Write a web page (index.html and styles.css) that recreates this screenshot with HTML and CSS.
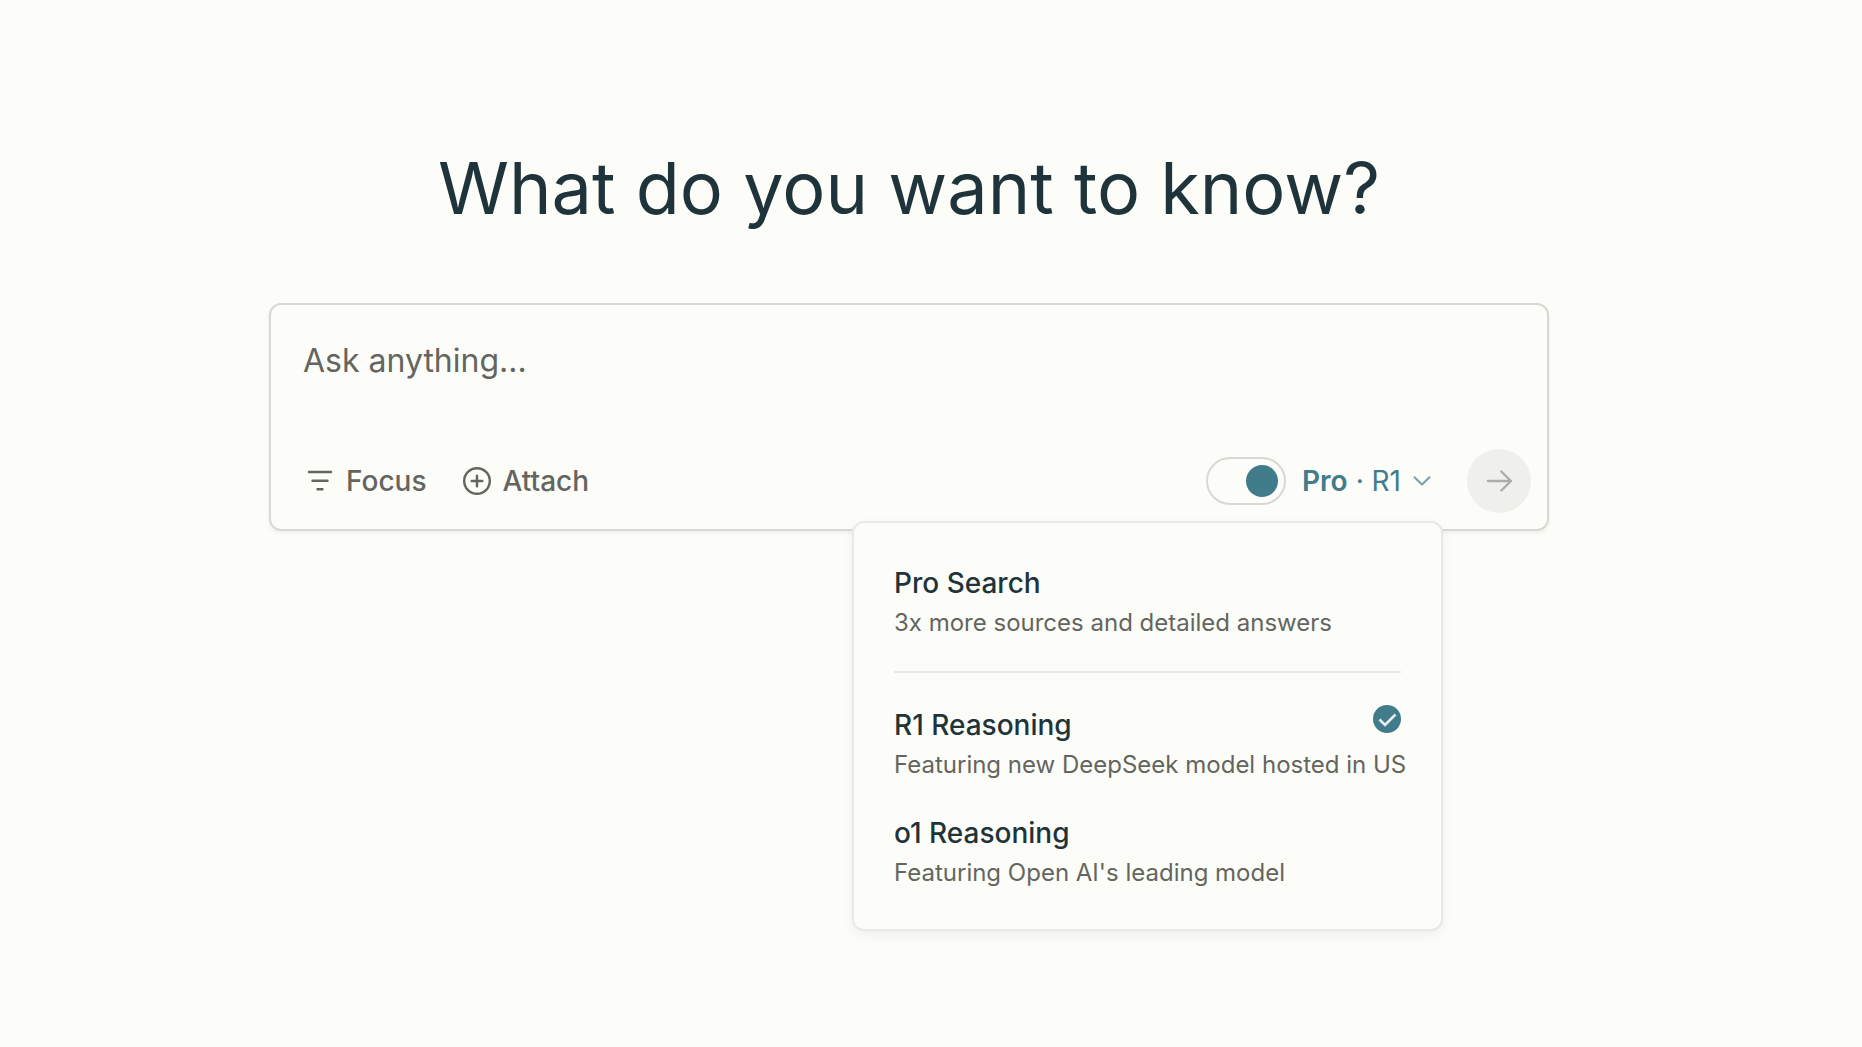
FILE: index.html
```html
<!DOCTYPE html>
<html lang="en">
<head>
<meta charset="UTF-8">
<meta name="viewport" content="width=device-width, initial-scale=1.0">
<title>What do you want to know?</title>
<link rel="stylesheet" href="styles.css">
</head>
<body>

<main class="page">
    <h1 class="title">What do you want to know?</h1>

    <!-- Search box -->
    <form class="search-box">
        <textarea class="question" rows="1" placeholder="Ask anything..." aria-label="Ask anything"></textarea>

        <div class="toolbar">
            <button type="button" class="tool-btn">
                <svg class="icon" viewBox="0 0 28 28" fill="none" stroke="currentColor" stroke-width="2.400" stroke-linecap="round">
                    <path d="M3 5h22M6.500 13.700h15M11.500 22.300h5"/>
                </svg>
                Focus
            </button>
            <button type="button" class="tool-btn">
                <svg class="icon" viewBox="0 0 28 28" fill="none" stroke="currentColor" stroke-width="2.400" stroke-linecap="round">
                    <circle cx="14" cy="14" r="12.800"/>
                    <path d="M14 8.700v10.600M8.700 14h10.600"/>
                </svg>
                Attach
            </button>

            <div class="model">
                <input type="checkbox" id="pro" class="toggle" checked>
                <label for="pro" class="pro-label">Pro</label>
                <button type="button" class="model-btn" aria-haspopup="menu" aria-expanded="true">
                    <span>· R1</span>
                    <svg class="chevron" viewBox="0 0 18 10" fill="none" stroke="currentColor" stroke-width="2" stroke-linecap="round" stroke-linejoin="round">
                        <path d="M1.500 1.200L9 8.500l7.500-7.300"/>
                    </svg>
                </button>
            </div>

            <button type="submit" class="send-btn" aria-label="Send">
                <svg class="icon" viewBox="0 0 28 28" fill="none" stroke="currentColor" stroke-width="2.400" stroke-linecap="round" stroke-linejoin="round">
                    <path d="M3 14h23M16.300 4.500l9.700 9.500-9.700 9.500"/>
                </svg>
            </button>
        </div>

        <!-- Model menu -->
        <div class="menu" role="menu">
            <button type="button" class="menu-item" role="menuitem">
                <span class="menu-name">Pro Search</span>
                <span class="menu-text">3x more sources and detailed answers</span>
            </button>
            <hr class="divider">
            <button type="button" class="menu-item" role="menuitem">
                <span class="menu-name">R1 Reasoning
                    <svg class="check" viewBox="0 0 28 28">
                        <circle cx="14" cy="14" r="14" fill="#417c8a"/>
                        <path d="M6.500 14.500l5.500 5.500L22.500 9.500" fill="none" stroke="#e9f3f8" stroke-width="2.600"/>
                    </svg>
                </span>
                <span class="menu-text">Featuring new DeepSeek model hosted in US</span>
            </button>
            <button type="button" class="menu-item" role="menuitem">
                <span class="menu-name">o1 Reasoning</span>
                <span class="menu-text">Featuring Open AI's leading model</span>
            </button>
        </div>
    </form>
</main>

</body>
</html>
```
FILE: styles.css
```css
* {
    box-sizing: border-box;
}

body {
    min-height: 100vh;
    margin: 0;
    background-color: #fcfdf8;
    color: #1f343a;
    font-family: Inter, "Liberation Sans", sans-serif;
}

button {
    padding: 0;
    border: none;
    background: none;
    color: inherit;
    font: inherit;
    text-align: left;
    cursor: pointer;
}

.page {
    max-width: 1324px;
    min-height: 100vh;
    margin: 0 auto;
    padding: 140px 44px 0 0;
}

.title {
    margin: 0 0 67px;
    font-size: 72px;
    font-weight: 400;
    line-height: 96px;
    text-align: center;
}

/* Search box */
.search-box {
    position: relative;
    padding: 32px 16px 16px 32px;
    border: 2px solid #d8d9d4;
    border-radius: 12px;
    box-shadow: 0 2px 4px rgba(0, 0, 0, 0.06);
}

.question {
    display: block;
    width: 100%;
    height: 48px;
    margin-bottom: 64px;
    padding: 0;
    border: none;
    outline: none;
    resize: none;
    overflow: hidden;
    background: none;
    color: inherit;
    font: inherit;
    font-size: 32px;
    line-height: 48px;
}

.question::placeholder {
    color: #64655f;
    opacity: 1;
}

.toolbar {
    display: flex;
    align-items: center;
    gap: 36px;
    padding-left: 3px;
    font-size: 28px;
    line-height: 40px;
}

.tool-btn {
    display: flex;
    align-items: center;
    gap: 12px;
    color: #64655f;
    font-weight: 500;
}

.icon {
    display: block;
    width: 28px;
    height: 28px;
}

.model {
    display: flex;
    align-items: center;
    margin-left: auto;
    color: #417c8a;
}

.toggle {
    appearance: none;
    display: flex;
    justify-content: flex-end;
    align-items: center;
    width: 80px;
    height: 48px;
    margin: 0 16px 0 0;
    padding: 0 6px;
    border: 2px solid #d8d9d4;
    border-radius: 24px;
    cursor: pointer;
}

.toggle::before {
    content: "";
    width: 32px;
    height: 32px;
    border-radius: 50%;
    background-color: #417c8a;
}

.toggle:not(:checked) {
    justify-content: flex-start;
}

.pro-label {
    margin-right: 8px;
    font-weight: 600;
}

.model-btn {
    display: flex;
    align-items: center;
    gap: 12px;
}

.chevron {
    width: 18px;
    height: 10px;
    opacity: 0.7;
}

.send-btn {
    display: flex;
    align-items: center;
    justify-content: center;
    width: 64px;
    height: 64px;
    border-radius: 50%;
    background-color: #eff0eb;
    color: #acada8;
}

/* Model menu */
.menu {
    position: absolute;
    top: calc(100% - 8px);
    right: 104px;
    width: 591px;
    padding: 40px;
    border: 2px solid #e9eae6;
    border-radius: 12px;
    background-color: #fcfdf8;
    box-shadow: 0 4px 12px rgba(0, 0, 0, 0.05);
}

.menu-item {
    display: block;
    width: 100%;
}

.menu-item + .menu-item {
    margin-top: 32px;
}

.menu-name {
    display: flex;
    justify-content: space-between;
    margin-bottom: 4px;
    font-size: 28px;
    font-weight: 500;
    line-height: 40px;
}

.menu-text {
    display: block;
    color: #64655f;
    font-size: 24px;
    line-height: 32px;
    white-space: nowrap;
}

.check {
    width: 28px;
    height: 28px;
}

.divider {
    height: 2px;
    margin: 32px 0;
    border: none;
    background-color: #e9eae6;
}
```
